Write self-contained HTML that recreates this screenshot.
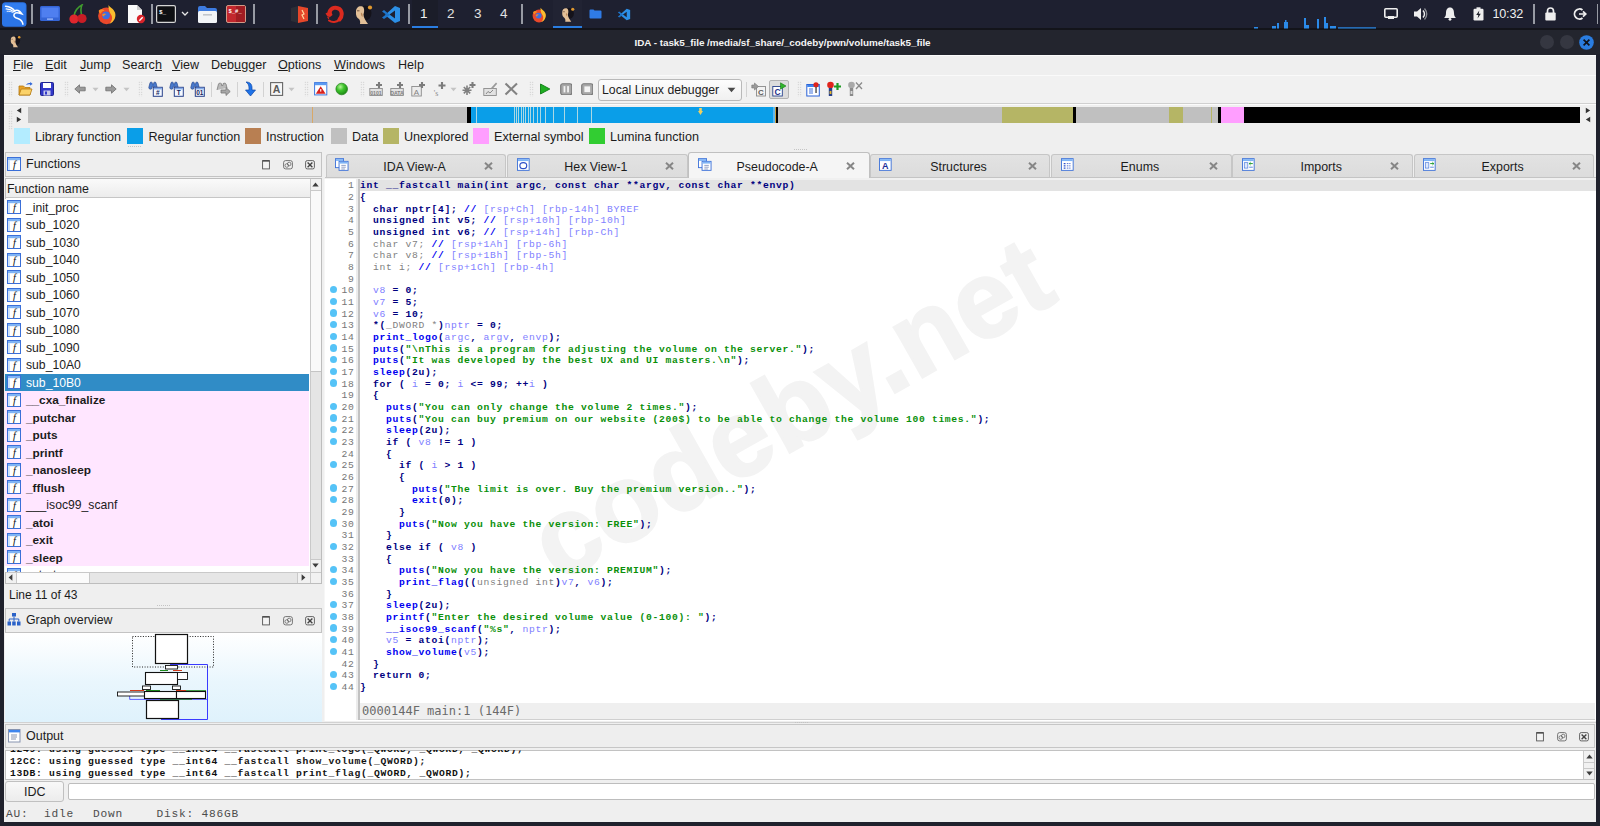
<!DOCTYPE html>
<html lang="en"><head><meta charset="utf-8"><title>IDA - task5_file</title>
<style>
*{box-sizing:border-box;margin:0;padding:0}
html,body{width:1600px;height:826px;overflow:hidden;background:#20222b}
body{position:relative;font-family:"Liberation Sans",sans-serif;font-size:12.6px;color:#1c1c1c}
.a{position:absolute}
.t{position:absolute;white-space:pre;line-height:16px}
#win{position:absolute;left:4px;top:54.5px;width:1592px;height:767.5px;background:#efefef}
.code{position:absolute;left:360px;white-space:pre;font-family:"Liberation Mono",monospace;font-size:9.7px;line-height:12px;height:12px;letter-spacing:0.685px}
.k{color:#00007f;font-weight:bold}
.f{color:#0000f0;font-weight:bold}
.c{color:#8080ff}
.g{color:#7f7f7f}
.s{color:#0a900a;font-weight:bold}
.ln{position:absolute;left:326px;width:28.6px;text-align:right;font-family:"Liberation Mono",monospace;font-size:9.7px;letter-spacing:0.685px;line-height:12px;color:#757575;white-space:pre}
.dot{position:absolute;left:329.7px;width:7.3px;height:7.3px;border-radius:50%;background:#55c3f7}
.row{position:absolute;left:5px;width:304px;height:17.5px}
.row .t{left:21px;top:1px;font-size:12.2px}
.fi{position:absolute;left:2px;top:1.5px;width:14px;height:14px}
</style></head>
<body>
<!-- desktop panel -->
<div class="a" id="panel" style="left:0;top:0;width:1600px;height:29px;background:#1e2030"></div>
<div class="a" style="left:0;top:28.300px;width:1600px;height:1.400px;background:#13141a"></div>
<div class="a" id="titlebar" style="left:0;top:29.700px;width:1600px;height:25px;background:#23252e"></div>
<!-- kali menu -->
<svg class="a" style="left:2px;top:1.500px" width="24.500" height="25" viewBox="0 0 24 24"><rect x="0" y="0" width="24" height="24" rx="3.500" fill="#2b74e6"/><rect x="1" y="1" width="22" height="10" rx="3" fill="#3683f5" opacity="0.6"/><g stroke="#fff" fill="none" stroke-linecap="round"><path d="M3.500 4 C7.500 4.500 10.500 6 12.500 8.500" stroke-width="1.5"/><path d="M4 6.500 C7 6.500 9.500 7.500 11.500 9.200" stroke-width="1.100"/><path d="M5 8.800 C7.500 8.600 9.500 9.200 11 10.200" stroke-width="0.9"/><path d="M12.500 8.500 C14.500 7 17 8 19.500 11.500 L16.500 10.600 C14.500 10 12.500 10.500 11.800 12 C11 14 13 15.200 15.500 16 C18.500 17 20 19 20.500 21.500" stroke-width="1.500"/></g></svg>
<div class="a" style="left:31px;top:4px;width:1.6px;height:20px;background:#979aa3"></div>
<!-- desktop icon -->
<svg class="a" style="left:40px;top:6px" width="20" height="17" viewBox="0 0 20 17"><rect x="0" y="0" width="20" height="15" rx="1.5" fill="#3565d6"/><rect x="1.5" y="1.5" width="17" height="10" fill="#4f7ff0"/><rect x="7" y="12.5" width="6" height="1.2" fill="#a9c2ff"/></svg>
<!-- cherry -->
<svg class="a" style="left:68px;top:4px" width="20" height="21" viewBox="0 0 20 21"><path d="M6 12 C7 6 10 3 14 1 C12 5 13 9 14 12" stroke="#3f9a2e" stroke-width="1.6" fill="none"/><circle cx="6" cy="15" r="4.6" fill="#e0262d"/><circle cx="14" cy="14.5" r="4.6" fill="#c81d25"/></svg>
<!-- firefox -->
<svg class="a" style="left:96px;top:4px" width="21" height="21" viewBox="0 0 21 21"><circle cx="10.5" cy="11.8" r="8.4" fill="#e9482b"/><path d="M12.500 1 C14 3.500 17.500 4.500 19 8.500 C20.500 13 18 18 13.500 19.800 C16.500 16.500 16.800 13 15 10.500 C13.500 8.500 12.300 5 12.500 1Z" fill="#fbbd2e"/><path d="M2.800 6.500 C4.500 4.800 7 5 8.500 6.800 C6.500 6.800 5.200 8 5 9.800 C3.500 9.300 2.500 8 2.800 6.500Z" fill="#f78a22"/><circle cx="10" cy="11.300" r="3.900" fill="#3d6fe2"/><path d="M6.200 10.500 C7.500 9 9.500 9.300 10.500 10.300 C9 10.300 8 11.300 8.300 12.500 C7 12.500 6.200 11.600 6.200 10.500Z" fill="#f78a22"/></svg>
<!-- document -->
<svg class="a" style="left:126px;top:4px" width="21" height="21" viewBox="0 0 21 21"><path d="M2 1 H11 L16 6 V19 H2Z" fill="#fafafa"/><path d="M11 1 L16 6 H11Z" fill="#cfcfcf"/><circle cx="15" cy="15" r="4.2" fill="#d8232a"/><rect x="12.6" y="14.3" width="4.8" height="1.4" fill="#fff" transform="rotate(-45 15 15)"/></svg>
<div class="a" style="left:151px;top:4px;width:1.6px;height:20px;background:#979aa3"></div>
<!-- terminal -->
<svg class="a" style="left:156px;top:5px" width="20" height="18" viewBox="0 0 20 18"><rect x="0.6" y="0.6" width="18.8" height="16.8" rx="1.5" fill="#0e0f13" stroke="#d5d5d5" stroke-width="1.2"/><text x="3" y="8.5" font-family="Liberation Mono,monospace" font-size="6" font-weight="bold" fill="#fff">$_</text></svg>
<svg class="a" style="left:181px;top:11px" width="8" height="6" viewBox="0 0 8 6"><path d="M1 1 L4 4 L7 1" stroke="#e6e6e6" stroke-width="1.3" fill="none"/></svg>
<!-- folder -->
<svg class="a" style="left:197px;top:5px" width="21" height="19" viewBox="0 0 21 19"><path d="M1 3 Q1 1 3 1 H8 L10 3 H18 Q20 3 20 5 V8 H1Z" fill="#3d7be0"/><rect x="1" y="6" width="19" height="12" rx="1.5" fill="#f2f4f7"/><rect x="6" y="9" width="9" height="1.6" fill="#c2c6cc"/></svg>
<!-- red terminal -->
<svg class="a" style="left:226px;top:5px" width="20" height="18" viewBox="0 0 20 18"><rect x="0.5" y="0.5" width="19" height="17" rx="1.5" fill="#c2272d" stroke="#e8b9a0" stroke-width="0.8"/><rect x="10" y="1" width="9" height="16" fill="#a01c22"/><text x="2.5" y="8" font-family="Liberation Mono,monospace" font-size="5.5" font-weight="bold" fill="#fff">$_#_</text></svg>
<div class="a" style="left:253px;top:4px;width:1.6px;height:20px;background:#979aa3"></div>
<!-- orange box icon -->
<svg class="a" style="left:290px;top:5px" width="20" height="19" viewBox="0 0 20 19"><path d="M1 3 L8 1 V18 L1 16Z" fill="#2b2d36"/><path d="M8 1 L18 3 V16 L8 18Z" fill="#e6472a"/><path d="M12 5 L14 9 L12 10 L14 14" stroke="#ffd9a0" stroke-width="1.2" fill="none"/></svg>
<div class="a" style="left:316px;top:4px;width:1.6px;height:20px;background:#979aa3"></div>
<!-- red dragon -->
<svg class="a" style="left:324px;top:4px" width="21" height="21" viewBox="0 0 21 21"><g stroke="#db2a1f" fill="none" stroke-linecap="round"><path d="M5.500 8 C7 3.500 12 2.500 15.500 5 C18.500 7.500 18.500 12.500 15.500 15.500" stroke-width="4"/><path d="M15.500 15.500 C12.500 18.500 8 18.800 5 16.500" stroke-width="2"/></g><path d="M1.500 9.500 L7 6.500 L8.500 11 L6 13 L3.500 12.500Z" fill="#db2a1f"/><path d="M3 12.800 L5.500 13.500 L4.500 15.500Z" fill="#db2a1f"/></svg>
<!-- lady (IDA) -->
<svg class="a" style="left:353px;top:3px" width="20" height="23" viewBox="0 0 20 22"><ellipse cx="12" cy="9.5" rx="6.5" ry="7.5" fill="#14121a"/><path d="M3 8 C3 4 6 2 9.5 3 C11.5 4 11.5 8 10.5 11 C10.5 14 12.5 17 15 20.5 L7 20.5 C7.500 18.500 7 16.500 6 15.500 C4 14.500 2.500 12 3 8Z" fill="#e2bf97"/><path d="M8 9 C9.500 9.500 10 11.500 9.500 13.500 C8.500 12.500 7.500 11 8 9Z" fill="#b98659"/><path d="M4 7.300 H6.500" stroke="#6a4a35" stroke-width="0.9"/><circle cx="17" cy="4" r="2.1" fill="#df982f"/></svg>
<!-- vscode -->
<svg class="a" style="left:381px;top:5px" width="20" height="19" viewBox="0 0 20 19"><path d="M14 1 L19 3 V16 L14 18 L4 10 L14 1Z M14 5.5 L8.5 9.5 L14 13.5Z" fill="#2c8fe6" fill-rule="evenodd"/><path d="M1 6.5 L3 5 L9 10 L3 14 L1 12.5 L5 9.5Z" fill="#1d74c9"/></svg>
<div class="a" style="left:408px;top:4px;width:1.6px;height:20px;background:#979aa3"></div>
<!-- workspaces -->
<div class="a" style="left:412px;top:0;width:26px;height:28px;background:#1b1d29"></div>
<div class="a" style="left:412px;top:26px;width:26px;height:2px;background:#2a7de1"></div>
<span class="t" style="left:420px;top:6px;color:#f2f2f2;font-size:13.5px">1</span>
<span class="t" style="left:447px;top:6px;color:#e2e2e2;font-size:13.5px">2</span>
<span class="t" style="left:474px;top:6px;color:#e2e2e2;font-size:13.5px">3</span>
<span class="t" style="left:500px;top:6px;color:#e2e2e2;font-size:13.5px">4</span>
<div class="a" style="left:521px;top:4px;width:1.6px;height:20px;background:#979aa3"></div>
<!-- task icons -->
<svg class="a" style="left:531px;top:7px" width="16" height="16" viewBox="0 0 21 21"><circle cx="10.5" cy="11.8" r="8.4" fill="#e9482b"/><path d="M12.500 1 C14 3.500 17.500 4.500 19 8.500 C20.500 13 18 18 13.500 19.800 C16.500 16.500 16.800 13 15 10.500 C13.500 8.500 12.300 5 12.500 1Z" fill="#fbbd2e"/><path d="M2.800 6.500 C4.500 4.800 7 5 8.500 6.800 C6.500 6.800 5.200 8 5 9.800 C3.500 9.300 2.500 8 2.800 6.500Z" fill="#f78a22"/><circle cx="10" cy="11.300" r="3.900" fill="#3d6fe2"/><path d="M6.200 10.500 C7.500 9 9.500 9.300 10.500 10.300 C9 10.300 8 11.300 8.300 12.500 C7 12.500 6.200 11.600 6.200 10.500Z" fill="#f78a22"/></svg>
<div class="a" style="left:553px;top:0;width:29px;height:28px;background:#212333"></div>
<div class="a" style="left:553px;top:26px;width:29px;height:2px;background:#2a7de1"></div>
<svg class="a" style="left:560px;top:6px" width="15" height="17" viewBox="0 0 20 22"><ellipse cx="12" cy="9.5" rx="6.5" ry="7.5" fill="#14121a"/><path d="M3 8 C3 4 6 2 9.5 3 C11.5 4 11.5 8 10.5 11 C10.5 14 12.5 17 15 20.5 L7 20.5 C7.500 18.500 7 16.500 6 15.500 C4 14.500 2.500 12 3 8Z" fill="#e2bf97"/><path d="M8 9 C9.500 9.500 10 11.500 9.500 13.500 C8.500 12.500 7.500 11 8 9Z" fill="#b98659"/><path d="M4 7.300 H6.500" stroke="#6a4a35" stroke-width="0.9"/><circle cx="17" cy="4" r="2.1" fill="#df982f"/></svg>
<svg class="a" style="left:589px;top:9px" width="13" height="10" viewBox="0 0 13 10"><path d="M0.500 1.500 Q0.500 0.500 1.500 0.500 H4.500 L5.500 1.500 H11.500 Q12.500 1.500 12.500 2.500 V8.500 Q12.500 9.500 11.500 9.500 H1.500 Q0.500 9.500 0.500 8.500Z" fill="#2f7be6"/></svg>
<svg class="a" style="left:617px;top:8px" width="14" height="13" viewBox="0 0 20 19"><path d="M14 1 L19 3 V16 L14 18 L4 10 L14 1Z M14 5.5 L8.5 9.5 L14 13.5Z" fill="#2c8fe6" fill-rule="evenodd"/><path d="M1 6.5 L3 5 L9 10 L3 14 L1 12.5 L5 9.5Z" fill="#1d74c9"/></svg>
<!-- cpu graph -->
<svg class="a" style="left:1250px;top:14px" width="130" height="15" viewBox="0 0 130 15"><g fill="#2b8bea"><rect x="4" y="13" width="4" height="1.5"/><rect x="22" y="12" width="4" height="2.5"/><rect x="27" y="9" width="2" height="5.5"/><rect x="34" y="8" width="4" height="6.5"/><rect x="35" y="6" width="1.5" height="3"/><rect x="54" y="4" width="2" height="10.5"/><rect x="56" y="11" width="3" height="3.5"/><rect x="67" y="5" width="2" height="9.5"/><rect x="74" y="3" width="2" height="11.5"/><rect x="76" y="9" width="2" height="5.5"/><rect x="80" y="12" width="6" height="2.5"/><rect x="88" y="13.3" width="38" height="1.2"/></g></svg>
<!-- tray -->
<svg class="a" style="left:1384px;top:8px" width="14" height="12" viewBox="0 0 14 12"><rect x="0.8" y="0.8" width="12.4" height="8.4" rx="1" fill="none" stroke="#eee" stroke-width="1.6"/><rect x="4" y="8" width="6" height="3" fill="#eee"/></svg>
<svg class="a" style="left:1413px;top:7px" width="16" height="14" viewBox="0 0 16 14"><path d="M1 4.5 H4 L8 1 V13 L4 9.5 H1Z" fill="#eee"/><path d="M10 3.5 Q13 7 10 10.5" stroke="#eee" stroke-width="1.4" fill="none"/><path d="M11.5 1.5 Q16 7 11.5 12.5" stroke="#8a8c93" stroke-width="1.3" fill="none"/></svg>
<svg class="a" style="left:1443px;top:7px" width="14" height="14" viewBox="0 0 14 14"><path d="M7 0.5 C10 0.5 11 3 11 6 C11 9 12 10 13 11 H1 C2 10 3 9 3 6 C3 3 4 0.5 7 0.5Z" fill="#eee"/><circle cx="7" cy="12.3" r="1.4" fill="#eee"/></svg>
<svg class="a" style="left:1473px;top:7px" width="11" height="14" viewBox="0 0 11 14"><rect x="0.5" y="1.8" width="10" height="11.7" rx="1.2" fill="#eee"/><rect x="3.5" y="0.3" width="4" height="2" fill="#eee"/><path d="M6.3 3.5 L3.2 8 H5.3 L4.6 11.5 L7.8 6.8 H5.7Z" fill="#1e2029"/></svg>
<span class="t" style="left:1492.5px;top:6px;color:#f0f0f0;font-size:12.6px;letter-spacing:-0.2px">10:32</span>
<div class="a" style="left:1533px;top:4px;width:1.6px;height:20px;background:#979aa3"></div>
<svg class="a" style="left:1545px;top:7px" width="11" height="14" viewBox="0 0 11 14"><path d="M2.5 6 V4 Q2.5 1 5.5 1 Q8.5 1 8.5 4 V6" stroke="#eee" stroke-width="1.7" fill="none"/><rect x="0.3" y="5.6" width="10.4" height="7.8" rx="1" fill="#eee"/></svg>
<svg class="a" style="left:1573px;top:7px" width="14" height="14" viewBox="0 0 14 14"><path d="M9.5 3 A5 5 0 1 0 9.5 11" stroke="#eee" stroke-width="1.8" fill="none"/><path d="M6 7 H12.5 M10 4.3 L12.8 7 L10 9.7" stroke="#eee" stroke-width="1.7" fill="none"/></svg>
<div class="a" style="left:1596.5px;top:4px;width:1.6px;height:20px;background:#979aa3"></div>
<!-- title bar -->
<svg class="a" style="left:9px;top:34px" width="12" height="15" viewBox="0 0 20 22"><ellipse cx="12" cy="9.5" rx="6.5" ry="7.5" fill="#14121a"/><path d="M3 8 C3 4 6 2 9.5 3 C11.5 4 11.5 8 10.5 11 C10.5 14 12.5 17 15 20.5 L7 20.5 C7.500 18.500 7 16.500 6 15.500 C4 14.500 2.500 12 3 8Z" fill="#e2bf97"/><path d="M8 9 C9.500 9.500 10 11.500 9.500 13.500 C8.500 12.500 7.500 11 8 9Z" fill="#b98659"/><path d="M4 7.300 H6.500" stroke="#6a4a35" stroke-width="0.9"/><circle cx="17" cy="4" r="2.1" fill="#df982f"/></svg>
<span class="t" id="title" style="left:634.5px;top:35px;color:#f4f4f4;font-size:9.92px;font-weight:bold;letter-spacing:-0.05px">IDA - task5_file /media/sf_share/_codeby/pwn/volume/task5_file</span>
<div class="a" style="left:1539.5px;top:35px;width:14px;height:14px;border-radius:50%;background:#353741"></div>
<div class="a" style="left:1559.5px;top:35px;width:14px;height:14px;border-radius:50%;background:#353741"></div>
<svg class="a" style="left:1579px;top:34.5px" width="15" height="15" viewBox="0 0 15 15"><circle cx="7.5" cy="7.5" r="7.3" fill="#2a7de1"/><path d="M4.6 4.6 L10.4 10.4 M10.4 4.6 L4.6 10.4" stroke="#10131c" stroke-width="1.7"/></svg>
<div id="win"></div>
<div class="a" style="left:4px;top:54.5px;width:1592px;height:20.5px;background:#efefef;"></div>
<div class="a" style="left:4px;top:54.5px;width:1592px;height:1px;background:#fbfbfb;"></div>
<div class="a" style="left:4px;top:75px;width:1592px;height:1px;background:#fafafa;"></div>
<div class="a" style="left:4px;top:76px;width:1592px;height:27px;background:#f1f1f1;"></div>
<div class="a" style="left:4px;top:103px;width:1592px;height:1px;background:#d0d0d0;"></div>
<div class="a" style="left:4px;top:104px;width:1592px;height:1px;background:#fbfbfb;"></div>
<span class="t" style="left:13px;top:57px;"><u>F</u>ile</span>
<span class="t" style="left:45px;top:57px;"><u>E</u>dit</span>
<span class="t" style="left:80px;top:57px;"><u>J</u>ump</span>
<span class="t" style="left:122px;top:57px;">Searc<u>h</u></span>
<span class="t" style="left:172px;top:57px;"><u>V</u>iew</span>
<span class="t" style="left:211px;top:57px;">Deb<u>u</u>gger</span>
<span class="t" style="left:278px;top:57px;"><u>O</u>ptions</span>
<span class="t" style="left:334px;top:57px;"><u>W</u>indows</span>
<span class="t" style="left:398px;top:57px;">Help</span>
<div class="a" style="left:7.5px;top:81px;width:5px;height:16px;background-image:radial-gradient(circle,#c2c2c2 0.6px,transparent 0.85px);background-size:2.5px 2.5px"></div>
<svg class="a" style="left:18px;top:81px" width="15" height="16" viewBox="0 0 15 16"><path d="M1 5 H5.5 L7 6.5 H12 V14 H1Z" fill="#e9a227" stroke="#b47a12" stroke-width="0.8"/><path d="M1 14 L3.2 8 H14 L12 14Z" fill="#fbd269" stroke="#b47a12" stroke-width="0.8"/><path d="M8 4 C9 2 11 1.5 12.5 2.2 L12 0.8 L14.6 3 L11.8 4.8 L12.2 3.4 C11 3 9.5 3.3 8 4Z" fill="#2a62d8"/></svg>
<svg class="a" style="left:40px;top:82px" width="14" height="14" viewBox="0 0 14 14"><rect x="0.5" y="0.5" width="13" height="13" rx="1" fill="#3238c8" stroke="#1f2490"/><rect x="3" y="1" width="8" height="5" fill="#fff"/><rect x="3.5" y="8.5" width="7" height="5" fill="#c9cbea"/><rect x="5" y="9.5" width="2" height="3" fill="#3238c8"/></svg>
<div class="a" style="left:63.5px;top:81px;width:5px;height:16px;background-image:radial-gradient(circle,#c2c2c2 0.6px,transparent 0.85px);background-size:2.5px 2.5px"></div>
<svg class="a" style="left:74px;top:84px" width="12" height="10" viewBox="0 0 12 10"><path d="M0.8 5 L5.5 0.8 V3.2 H11.2 V6.8 H5.5 V9.2Z" fill="#9a9a9a" stroke="#6e6e6e" stroke-width="0.8"/></svg>
<svg class="a" style="left:92px;top:87px" width="7" height="5" viewBox="0 0 7 5"><path d="M0.5 0.8 H6.5 L3.5 4.2Z" fill="#c4c4c4"/></svg>
<svg class="a" style="left:105px;top:84px" width="12" height="10" viewBox="0 0 12 10"><path d="M11.2 5 L6.5 0.8 V3.2 H0.8 V6.8 H6.5 V9.2Z" fill="#9a9a9a" stroke="#6e6e6e" stroke-width="0.8"/></svg>
<svg class="a" style="left:123px;top:87px" width="7" height="5" viewBox="0 0 7 5"><path d="M0.5 0.8 H6.5 L3.5 4.2Z" fill="#c4c4c4"/></svg>
<div class="a" style="left:137.5px;top:81px;width:5px;height:16px;background-image:radial-gradient(circle,#c2c2c2 0.6px,transparent 0.85px);background-size:2.5px 2.5px"></div>
<svg class="a" style="left:148px;top:81px" width="15" height="16" viewBox="0 0 15 16"><path d="M0.8 6.5 L2 2 Q2.300 0.800 3.500 1.200 L4.200 1.600 V3 H5.800 V1.600 L6.500 1.200 Q7.700 0.800 8 2 L9.200 6.500 Q9.200 8.200 7.500 8.200 Q5.800 8.200 5.800 6.500 V5.200 H4.200 V6.500 Q4.200 8.200 2.500 8.200 Q0.800 8.200 0.800 6.500Z" fill="#4a7acc" stroke="#27478f" stroke-width="0.7"/><rect x="5.300" y="6.300" width="9" height="9" fill="#f4f8ff" stroke="#27408a" stroke-width="1"/><rect x="5.800" y="6.800" width="8" height="1.600" fill="#7fa8e8"/><text x="9.800" y="14.300" font-family="Liberation Sans,sans-serif" font-weight="bold" font-size="6.500" text-anchor="middle" fill="#16245c">#</text></svg>
<svg class="a" style="left:169px;top:81px" width="15" height="16" viewBox="0 0 15 16"><path d="M0.8 6.5 L2 2 Q2.300 0.800 3.500 1.200 L4.200 1.600 V3 H5.800 V1.600 L6.500 1.200 Q7.700 0.800 8 2 L9.200 6.500 Q9.200 8.200 7.500 8.200 Q5.800 8.200 5.800 6.500 V5.200 H4.200 V6.500 Q4.200 8.200 2.500 8.200 Q0.800 8.200 0.800 6.500Z" fill="#4a7acc" stroke="#27478f" stroke-width="0.7"/><rect x="5.300" y="6.300" width="9" height="9" fill="#f4f8ff" stroke="#27408a" stroke-width="1"/><rect x="5.800" y="6.800" width="8" height="1.600" fill="#7fa8e8"/><text x="9.800" y="14.300" font-family="Liberation Sans,sans-serif" font-weight="bold" font-size="6.500" text-anchor="middle" fill="#16245c">T</text></svg>
<svg class="a" style="left:190px;top:81px" width="15" height="16" viewBox="0 0 15 16"><path d="M0.8 6.5 L2 2 Q2.300 0.800 3.500 1.200 L4.200 1.600 V3 H5.800 V1.600 L6.500 1.200 Q7.700 0.800 8 2 L9.200 6.500 Q9.200 8.200 7.500 8.200 Q5.800 8.200 5.800 6.500 V5.200 H4.200 V6.500 Q4.200 8.200 2.500 8.200 Q0.800 8.200 0.800 6.500Z" fill="#4a7acc" stroke="#27478f" stroke-width="0.7"/><rect x="5.300" y="6.300" width="9" height="9" fill="#f4f8ff" stroke="#27408a" stroke-width="1"/><rect x="5.800" y="6.800" width="8" height="1.600" fill="#7fa8e8"/><text x="9.800" y="14.300" font-family="Liberation Sans,sans-serif" font-weight="bold" font-size="6.500" text-anchor="middle" fill="#16245c">01</text></svg>
<div class="a" style="left:211px;top:82px;width:1px;height:15px;background:#d2d2d2;"></div>
<svg class="a" style="left:216px;top:82px" width="15" height="14" viewBox="0 0 15 14"><path d="M1 8 L2.5 2 Q3 0.8 4.5 1.2 L5.5 1.7 V3.5 H7 V1.7 L8 1.2 Q9.5 0.8 10 2 L11 6" fill="#b9b9b9" stroke="#7d7d7d" stroke-width="0.8"/><path d="M5 8 H10 V5.5 L14.2 9.5 L10 13.5 V11 H5Z" fill="#a6a6a6" stroke="#767676" stroke-width="0.8"/></svg>
<div class="a" style="left:237px;top:82px;width:1px;height:15px;background:#d2d2d2;"></div>
<svg class="a" style="left:244px;top:81px" width="13" height="16" viewBox="0 0 13 16"><path d="M2 1 C6 1 8 3 8 7 V9 H11.5 L6.5 15 L1.5 9 H5 V7 C5 4 4 2.5 2 1Z" fill="#1f73e8" stroke="#0d46a8" stroke-width="0.7"/></svg>
<div class="a" style="left:263px;top:82px;width:1px;height:15px;background:#d2d2d2;"></div>
<svg class="a" style="left:270px;top:82px" width="14" height="14" viewBox="0 0 14 14"><rect x="0.6" y="0.6" width="12" height="12.8" fill="#f6f6f6" stroke="#666" stroke-width="1.1"/><text x="6.600" y="11" font-family="Liberation Sans,sans-serif" font-size="10.500" font-weight="bold" text-anchor="middle" fill="#5a5a5a">A</text></svg>
<svg class="a" style="left:288px;top:87px" width="7" height="5" viewBox="0 0 7 5"><path d="M0.5 0.8 H6.5 L3.5 4.2Z" fill="#c4c4c4"/></svg>
<div class="a" style="left:303.5px;top:81px;width:5px;height:16px;background-image:radial-gradient(circle,#c2c2c2 0.6px,transparent 0.85px);background-size:2.5px 2.5px"></div>
<svg class="a" style="left:314px;top:82px" width="14" height="14" viewBox="0 0 14 14"><rect x="0.6" y="0.6" width="12.200" height="12.300" fill="#fff" stroke="#3b78e0" stroke-width="1"/><rect x="1" y="1" width="11.400" height="2.200" fill="#5a9af2"/><path d="M6.700 4.300 L11.600 11.800 H1.800Z" fill="#d8211c"/><rect x="6.200" y="7" width="1.100" height="2.600" fill="#fff"/></svg>
<svg class="a" style="left:335px;top:82px" width="14" height="14" viewBox="0 0 14 14"><defs><radialGradient id="gg" cx="0.38" cy="0.32" r="0.7"><stop offset="0" stop-color="#b6f59a"/><stop offset="0.45" stop-color="#3fc42d"/><stop offset="1" stop-color="#1b8a13"/></radialGradient></defs><circle cx="6.700" cy="7" r="5.800" fill="url(#gg)" stroke="#1d7c16" stroke-width="0.7"/></svg>
<div class="a" style="left:359.5px;top:81px;width:5px;height:16px;background-image:radial-gradient(circle,#c2c2c2 0.6px,transparent 0.85px);background-size:2.5px 2.5px"></div>
<svg class="a" style="left:369px;top:81px" width="15" height="16" viewBox="0 0 15 16"><rect x="0.8" y="7.5" width="12.5" height="7" fill="#e2e2e2" stroke="#8c8c8c" stroke-width="0.9"/><text x="7" y="13.6" font-family="Liberation Sans,sans-serif" font-size="5.2" font-weight="bold" text-anchor="middle" fill="#808080">0101</text><path d="M10 1 V7 M7 4 H13" stroke="#7c7c7c" stroke-width="2.1"/></svg>
<svg class="a" style="left:390px;top:81px" width="15" height="16" viewBox="0 0 15 16"><rect x="0.8" y="7.5" width="12.5" height="7" fill="#e2e2e2" stroke="#8c8c8c" stroke-width="0.9"/><text x="7" y="13.6" font-family="Liberation Sans,sans-serif" font-size="5.2" font-weight="bold" text-anchor="middle" fill="#808080">DATA</text><path d="M10 1 V7 M7 4 H13" stroke="#7c7c7c" stroke-width="2.1"/></svg>
<svg class="a" style="left:411px;top:81px" width="15" height="16" viewBox="0 0 15 16"><rect x="0.8" y="5.5" width="9.5" height="9.5" fill="#ececec" stroke="#8c8c8c" stroke-width="0.9"/><text x="5.5" y="13.6" font-family="Liberation Sans,sans-serif" font-size="8" text-anchor="middle" fill="#808080">A</text><path d="M11 1 V7 M8 4 H14" stroke="#7c7c7c" stroke-width="2.1"/></svg>
<svg class="a" style="left:432px;top:81px" width="15" height="16" viewBox="0 0 15 16"><text x="4" y="14.5" font-family="Liberation Serif,serif" font-size="8" text-anchor="middle" fill="#8a8a8a">'s</text><path d="M10 1 V8 M6.5 4.5 H13.5" stroke="#7c7c7c" stroke-width="2.1"/></svg>
<svg class="a" style="left:450px;top:87px" width="7" height="5" viewBox="0 0 7 5"><path d="M0.5 0.8 H6.5 L3.5 4.2Z" fill="#c4c4c4"/></svg>
<svg class="a" style="left:462px;top:81px" width="15" height="16" viewBox="0 0 15 16"><path d="M5 4.500 V14 M0.500 9.200 H9.500 M1.800 6 L8.200 12.400 M8.200 6 L1.800 12.400" stroke="#808080" stroke-width="1.6"/><path d="M10.5 1 V7 M7.5 4 H13.5" stroke="#7c7c7c" stroke-width="2.1"/></svg>
<svg class="a" style="left:483px;top:81px" width="15" height="16" viewBox="0 0 15 16"><rect x="0.8" y="7.5" width="12.5" height="7" fill="#e2e2e2" stroke="#8c8c8c" stroke-width="0.9"/><path d="M3 13 L5 10.5 L7 12 L10 9" stroke="#8a8a8a" stroke-width="1" fill="none"/><path d="M8 7 L13 1.5 L14.2 2.7 L9.5 8Z" fill="#9a9a9a"/></svg>
<svg class="a" style="left:504px;top:82px" width="15" height="14" viewBox="0 0 15 14"><path d="M1.5 1.5 L13 12.5 M13 1.5 L1.5 12.5" stroke="#828282" stroke-width="2.1"/></svg>
<div class="a" style="left:528.5px;top:81px;width:5px;height:16px;background-image:radial-gradient(circle,#c2c2c2 0.6px,transparent 0.85px);background-size:2.5px 2.5px"></div>
<svg class="a" style="left:539px;top:83px" width="12" height="12" viewBox="0 0 12 12"><path d="M1.5 1 L10.8 6 L1.5 11Z" fill="#1fae22" stroke="#0f7d14" stroke-width="0.9"/></svg>
<svg class="a" style="left:559.5px;top:82.5px" width="12.5" height="12.5" viewBox="0 0 14 14"><rect x="0.8" y="0.8" width="12.4" height="12.4" rx="2.2" fill="#a8a8a8" stroke="#7a7a7a" stroke-width="1.3"/><rect x="4" y="3.5" width="2" height="7" fill="#f4f4f4"/><rect x="8" y="3.5" width="2" height="7" fill="#f4f4f4"/></svg>
<svg class="a" style="left:580.5px;top:82.5px" width="12.5" height="12.5" viewBox="0 0 14 14"><rect x="0.8" y="0.8" width="12.4" height="12.4" rx="2.2" fill="#a8a8a8" stroke="#7a7a7a" stroke-width="1.3"/><rect x="3.8" y="3.8" width="6.4" height="6.4" fill="#f4f4f4"/></svg>
<div class="a" style="left:597.5px;top:78.5px;width:144px;height:22px;border:1px solid #b9b9b9;border-radius:3px;background:linear-gradient(#fdfdfd,#f0f0f0)"></div>
<span class="t" style="left:602px;top:81.5px;font-size:12.25px">Local Linux debugger</span>
<svg class="a" style="left:727px;top:87px" width="9" height="6" viewBox="0 0 9 6"><path d="M0.6 0.8 H8.4 L4.5 5.2Z" fill="#4a4a4a"/></svg>
<div class="a" style="left:745.5px;top:82px;width:1px;height:15px;background:#d2d2d2;"></div>
<svg class="a" style="left:751px;top:82px" width="15" height="15" viewBox="0 0 15 15"><rect x="5.5" y="4.5" width="9" height="9.5" fill="#f2f2f2" stroke="#8a8a8a" stroke-width="0.9"/><text x="10" y="12.6" font-family="Liberation Sans,sans-serif" font-size="8" font-weight="bold" text-anchor="middle" fill="#5d5d5d">C</text><path d="M0.8 3 H3.5 V1 L7.5 4.5 L3.5 8 V6 H0.8Z" fill="#9a9a9a" stroke="#777" stroke-width="0.6"/></svg>
<div class="a" style="left:769px;top:80px;width:20px;height:19px;border:1px solid #b2b2b2;border-radius:2px;background:#dcdcdc"></div>
<svg class="a" style="left:772px;top:82px" width="15" height="15" viewBox="0 0 15 15"><rect x="0.8" y="4.5" width="9.5" height="9.5" fill="#fff" stroke="#27408a" stroke-width="0.9"/><text x="5.5" y="12.8" font-family="Liberation Sans,sans-serif" font-size="8.5" font-weight="bold" text-anchor="middle" fill="#1f2f8a">C</text><path d="M8.5 0.8 L14 4 L8.5 7.2Z" fill="#2fb52a" stroke="#167a14" stroke-width="0.6"/></svg>
<div class="a" style="left:796.5px;top:81px;width:5px;height:16px;background-image:radial-gradient(circle,#c2c2c2 0.6px,transparent 0.85px);background-size:2.5px 2.5px"></div>
<svg class="a" style="left:806px;top:81px" width="15" height="16" viewBox="0 0 15 16"><rect x="0.8" y="3.5" width="12.5" height="11.5" fill="#fff" stroke="#2a62d8" stroke-width="1"/><rect x="1.2" y="4" width="11.7" height="2" fill="#3f86ee"/><path d="M3 8 H7 M3 10 H7 M3 12 H7" stroke="#2a62d8" stroke-width="0.9"/><circle cx="10" cy="3.8" r="2.6" fill="#e0241c"/><rect x="9.3" y="6" width="1.5" height="6" fill="#555"/></svg>
<svg class="a" style="left:826px;top:81px" width="16" height="16" viewBox="0 0 16 16"><circle cx="4.5" cy="4" r="3.3" fill="#e0241c"/><rect x="2.8" y="7" width="3.4" height="8" fill="#27408a"/><rect x="3.6" y="10" width="1.8" height="3" fill="#e7b52a"/><path d="M11.5 2 V9 M8 5.5 H15" stroke="#1f9a22" stroke-width="2.2"/></svg>
<svg class="a" style="left:847px;top:81px" width="16" height="16" viewBox="0 0 16 16"><circle cx="4.5" cy="4" r="3.3" fill="#a9a9a9"/><rect x="2.8" y="7" width="3.4" height="8" fill="#8a8a8a"/><rect x="3.6" y="10" width="1.8" height="3" fill="#d9d9d9"/><path d="M9 1.5 L15 8 M15 1.5 L9 8" stroke="#8a8a8a" stroke-width="1.3"/></svg>
<div class="a" style="left:7.5px;top:110px;width:5px;height:20px;background-image:radial-gradient(circle,#c2c2c2 0.6px,transparent 0.85px);background-size:2.5px 2.5px"></div>
<svg class="a" style="left:16px;top:107px" width="6" height="16" viewBox="0 0 6 16"><path d="M5.2 0.8 V6.2 L0.8 3.5Z M0.8 9.8 V15.2 L5.2 12.5Z" fill="#333"/></svg>
<div class="a" style="left:27.5px;top:107px;width:439.5px;height:16px;background:#c0c0c0;"></div>
<div class="a" style="left:467px;top:107px;width:3.5px;height:16px;background:#000;"></div>
<div class="a" style="left:470.5px;top:107px;width:302.5px;height:16px;background:#0a9ee8;"></div>
<div class="a" style="left:773px;top:107px;width:2px;height:16px;background:#5fb8f0;"></div>
<div class="a" style="left:775px;top:107px;width:3px;height:16px;background:#000;"></div>
<div class="a" style="left:778px;top:107px;width:223.5px;height:16px;background:#c0c0c0;"></div>
<div class="a" style="left:1001.5px;top:107px;width:71.5px;height:16px;background:#b5b565;"></div>
<div class="a" style="left:1073px;top:107px;width:3px;height:16px;background:#000;"></div>
<div class="a" style="left:1076px;top:107px;width:93px;height:16px;background:#c0c0c0;"></div>
<div class="a" style="left:1169px;top:107px;width:13.5px;height:16px;background:#b5b565;"></div>
<div class="a" style="left:1182.5px;top:107px;width:35.0px;height:16px;background:#c0c0c0;"></div>
<div class="a" style="left:1217.5px;top:107px;width:3.0px;height:16px;background:#000;"></div>
<div class="a" style="left:1220.5px;top:107px;width:23.5px;height:16px;background:#ff9eff;"></div>
<div class="a" style="left:1244px;top:107px;width:336px;height:16px;background:#000;"></div>
<div class="a" style="left:312.3px;top:107px;width:0.8px;height:16px;background:#d8a868;"></div>
<div class="a" style="left:775px;top:107px;width:0.8px;height:16px;background:#c9a040;"></div>
<div class="a" style="left:1211px;top:107px;width:0.8px;height:16px;background:#b5b565;"></div>
<div class="a" style="left:476px;top:107px;width:0.7px;height:16px;background:rgba(225,235,225,0.75);"></div>
<div class="a" style="left:513.7px;top:107px;width:0.7px;height:16px;background:rgba(225,235,225,0.75);"></div>
<div class="a" style="left:516px;top:107px;width:0.7px;height:16px;background:rgba(225,235,225,0.75);"></div>
<div class="a" style="left:518.3px;top:107px;width:0.7px;height:16px;background:rgba(225,235,225,0.75);"></div>
<div class="a" style="left:520.6px;top:107px;width:0.7px;height:16px;background:rgba(225,235,225,0.75);"></div>
<div class="a" style="left:523px;top:107px;width:0.7px;height:16px;background:rgba(225,235,225,0.75);"></div>
<div class="a" style="left:525.3px;top:107px;width:0.7px;height:16px;background:rgba(225,235,225,0.75);"></div>
<div class="a" style="left:527.6px;top:107px;width:0.7px;height:16px;background:rgba(225,235,225,0.75);"></div>
<div class="a" style="left:530px;top:107px;width:0.7px;height:16px;background:rgba(225,235,225,0.75);"></div>
<div class="a" style="left:533px;top:107px;width:0.7px;height:16px;background:rgba(225,235,225,0.75);"></div>
<div class="a" style="left:536.5px;top:107px;width:0.7px;height:16px;background:rgba(225,235,225,0.75);"></div>
<div class="a" style="left:540px;top:107px;width:0.7px;height:16px;background:rgba(225,235,225,0.75);"></div>
<div class="a" style="left:544.5px;top:107px;width:0.7px;height:16px;background:rgba(225,235,225,0.75);"></div>
<div class="a" style="left:553px;top:107px;width:0.7px;height:16px;background:rgba(225,235,225,0.75);"></div>
<div class="a" style="left:563.5px;top:107px;width:0.7px;height:16px;background:rgba(225,235,225,0.75);"></div>
<div class="a" style="left:577px;top:107px;width:0.7px;height:16px;background:rgba(225,235,225,0.75);"></div>
<div class="a" style="left:590.5px;top:107px;width:0.7px;height:16px;background:rgba(225,235,225,0.75);"></div>
<svg class="a" style="left:698px;top:107.5px" width="5" height="7" viewBox="0 0 5 7"><path d="M1.2 0 H3.8 V3 H5 L2.5 7 L0 3 H1.2Z" fill="#f0d060"/></svg>
<svg class="a" style="left:1585px;top:107px" width="6" height="16" viewBox="0 0 6 16"><path d="M0.8 0.8 V6.2 L5.2 3.5Z M5.2 9.8 V15.2 L0.8 12.5Z" fill="#333"/></svg>
<div class="a" style="left:14px;top:128px;width:16px;height:16px;background:#b3ecff;"></div>
<span class="t" style="left:35px;top:128.5px;font-size:12.6px">Library function</span>
<div class="a" style="left:127px;top:128px;width:16px;height:16px;background:#0a9ee8;"></div>
<span class="t" style="left:148.5px;top:128.5px;font-size:12.6px">Regular function</span>
<div class="a" style="left:245px;top:128px;width:16px;height:16px;background:#b87f52;"></div>
<span class="t" style="left:266px;top:128.5px;font-size:12.6px">Instruction</span>
<div class="a" style="left:331px;top:128px;width:16px;height:16px;background:#c0c0c0;"></div>
<span class="t" style="left:352px;top:128.5px;font-size:12.6px">Data</span>
<div class="a" style="left:383px;top:128px;width:16px;height:16px;background:#b5b565;"></div>
<span class="t" style="left:404px;top:128.5px;font-size:12.6px">Unexplored</span>
<div class="a" style="left:473px;top:128px;width:16px;height:16px;background:#ff9eff;"></div>
<span class="t" style="left:494px;top:128.5px;font-size:12.6px">External symbol</span>
<div class="a" style="left:589px;top:128px;width:16px;height:16px;background:#32cd32;"></div>
<span class="t" style="left:610px;top:128.5px;font-size:12.6px">Lumina function</span>
<div class="a" style="left:128px;top:145.5px;width:14px;height:1px;background:transparent;background-image:repeating-linear-gradient(90deg,#c4c4c4 0 1px,transparent 1px 2px)"></div>
<div class="a" style="left:794px;top:148.5px;width:14px;height:1px;background:transparent;background-image:repeating-linear-gradient(90deg,#c4c4c4 0 1px,transparent 1px 2px)"></div>
<div class="a" style="left:4.5px;top:152px;width:317.5px;height:24.5px;background:#eeeeee;border:1px solid #c3c3c3"></div>
<svg class="a" style="left:7px;top:157px" width="14" height="14" viewBox="0 0 14 14"><rect x="0.5" y="0.5" width="13" height="13" fill="#fff" stroke="#3a6fd8"/><rect x="1" y="1" width="12" height="2.2" fill="#7fb4f5"/><rect x="1" y="3" width="2" height="10" fill="#cfe3fb"/><text x="7.4" y="10.9" font-family="Liberation Serif,serif" font-style="italic" font-size="10.5" text-anchor="middle" fill="#111">f</text></svg>
<span class="t" style="left:26px;top:156px;font-size:12.5px">Functions</span>
<svg class="a" style="left:262px;top:160px" width="54" height="10" viewBox="0 0 54 10"><rect x="0.6" y="0.6" width="6.8" height="8.3" fill="#f4f4f4" stroke="#555" stroke-width="0.9"/><rect x="0.6" y="0.3" width="6.8" height="1.3" fill="#444"/><rect x="21.6" y="0.6" width="8.8" height="8.3" rx="2" fill="#f0f0f0" stroke="#666" stroke-width="0.9"/><circle cx="24.8" cy="5.5" r="1.8" fill="none" stroke="#666" stroke-width="0.8"/><circle cx="27.2" cy="4" r="1.8" fill="none" stroke="#666" stroke-width="0.8"/><rect x="43.6" y="0.6" width="8.8" height="8.3" rx="1.6" fill="#f0f0f0" stroke="#555" stroke-width="0.9"/><path d="M45.6 2.4 L50.4 7.2 M50.4 2.4 L45.6 7.2" stroke="#444" stroke-width="1.4"/></svg>
<div class="a" style="left:4.5px;top:178px;width:317.5px;height:406px;background:#fff;border:1px solid #bdbdbd"></div>
<div class="a" style="left:5.5px;top:179px;width:304px;height:18.5px;background:linear-gradient(#fafafa,#ececec);border-bottom:1px solid #c6c6c6"></div>
<span class="t" style="left:7px;top:181px;font-size:12.4px">Function name</span>
<div class="a" style="left:309.5px;top:179px;width:11.5px;height:392.5px;background:#f1f1f1;border-left:1px solid #c9c9c9"></div>
<div class="a" style="left:309.5px;top:190px;width:11.5px;height:1px;background:#c9c9c9;"></div>
<svg class="a" style="left:312px;top:182px" width="7" height="5" viewBox="0 0 7 5"><path d="M0.3 4.4 L3.5 0.6 L6.7 4.4Z" fill="#3c3c3c"/></svg>
<div class="a" style="left:310.5px;top:191px;width:10.5px;height:180.2px;background:#f9f9f9;"></div>
<div class="a" style="left:310.5px;top:371.2px;width:10.5px;height:187.8px;background:#e5e5e5;border-top:1px solid #c4c4c4"></div>
<div class="a" style="left:309.5px;top:559px;width:11.5px;height:1px;background:#c9c9c9;"></div>
<svg class="a" style="left:312px;top:563px" width="7" height="5" viewBox="0 0 7 5"><path d="M0.3 0.6 L3.5 4.4 L6.7 0.6Z" fill="#3c3c3c"/></svg>
<div class="a" id="flist" style="left:5px;top:198.5px;width:304.5px;height:373px;overflow:hidden;background:#fff">
<div class="row" style="left:0;top:0.0px;background:#fff"><svg class="fi" viewBox="0 0 14 14"><rect x="0.5" y="0.5" width="13" height="13" fill="#fff" stroke="#3a6fd8"/><rect x="1" y="1" width="12" height="2.2" fill="#7fb4f5"/><rect x="1" y="3" width="2" height="10" fill="#cfe3fb"/><text x="7.4" y="10.9" font-family="Liberation Serif,serif" font-style="italic" font-size="10.5" text-anchor="middle" fill="#111">f</text></svg><span class="t" style="color:#1c1c1c;font-weight:normal">_init_proc</span></div>
<div class="row" style="left:0;top:17.5px;background:#fff"><svg class="fi" viewBox="0 0 14 14"><rect x="0.5" y="0.5" width="13" height="13" fill="#fff" stroke="#3a6fd8"/><rect x="1" y="1" width="12" height="2.2" fill="#7fb4f5"/><rect x="1" y="3" width="2" height="10" fill="#cfe3fb"/><text x="7.4" y="10.9" font-family="Liberation Serif,serif" font-style="italic" font-size="10.5" text-anchor="middle" fill="#111">f</text></svg><span class="t" style="color:#1c1c1c;font-weight:normal">sub_1020</span></div>
<div class="row" style="left:0;top:35.0px;background:#fff"><svg class="fi" viewBox="0 0 14 14"><rect x="0.5" y="0.5" width="13" height="13" fill="#fff" stroke="#3a6fd8"/><rect x="1" y="1" width="12" height="2.2" fill="#7fb4f5"/><rect x="1" y="3" width="2" height="10" fill="#cfe3fb"/><text x="7.4" y="10.9" font-family="Liberation Serif,serif" font-style="italic" font-size="10.5" text-anchor="middle" fill="#111">f</text></svg><span class="t" style="color:#1c1c1c;font-weight:normal">sub_1030</span></div>
<div class="row" style="left:0;top:52.5px;background:#fff"><svg class="fi" viewBox="0 0 14 14"><rect x="0.5" y="0.5" width="13" height="13" fill="#fff" stroke="#3a6fd8"/><rect x="1" y="1" width="12" height="2.2" fill="#7fb4f5"/><rect x="1" y="3" width="2" height="10" fill="#cfe3fb"/><text x="7.4" y="10.9" font-family="Liberation Serif,serif" font-style="italic" font-size="10.5" text-anchor="middle" fill="#111">f</text></svg><span class="t" style="color:#1c1c1c;font-weight:normal">sub_1040</span></div>
<div class="row" style="left:0;top:70.0px;background:#fff"><svg class="fi" viewBox="0 0 14 14"><rect x="0.5" y="0.5" width="13" height="13" fill="#fff" stroke="#3a6fd8"/><rect x="1" y="1" width="12" height="2.2" fill="#7fb4f5"/><rect x="1" y="3" width="2" height="10" fill="#cfe3fb"/><text x="7.4" y="10.9" font-family="Liberation Serif,serif" font-style="italic" font-size="10.5" text-anchor="middle" fill="#111">f</text></svg><span class="t" style="color:#1c1c1c;font-weight:normal">sub_1050</span></div>
<div class="row" style="left:0;top:87.5px;background:#fff"><svg class="fi" viewBox="0 0 14 14"><rect x="0.5" y="0.5" width="13" height="13" fill="#fff" stroke="#3a6fd8"/><rect x="1" y="1" width="12" height="2.2" fill="#7fb4f5"/><rect x="1" y="3" width="2" height="10" fill="#cfe3fb"/><text x="7.4" y="10.9" font-family="Liberation Serif,serif" font-style="italic" font-size="10.5" text-anchor="middle" fill="#111">f</text></svg><span class="t" style="color:#1c1c1c;font-weight:normal">sub_1060</span></div>
<div class="row" style="left:0;top:105.0px;background:#fff"><svg class="fi" viewBox="0 0 14 14"><rect x="0.5" y="0.5" width="13" height="13" fill="#fff" stroke="#3a6fd8"/><rect x="1" y="1" width="12" height="2.2" fill="#7fb4f5"/><rect x="1" y="3" width="2" height="10" fill="#cfe3fb"/><text x="7.4" y="10.9" font-family="Liberation Serif,serif" font-style="italic" font-size="10.5" text-anchor="middle" fill="#111">f</text></svg><span class="t" style="color:#1c1c1c;font-weight:normal">sub_1070</span></div>
<div class="row" style="left:0;top:122.5px;background:#fff"><svg class="fi" viewBox="0 0 14 14"><rect x="0.5" y="0.5" width="13" height="13" fill="#fff" stroke="#3a6fd8"/><rect x="1" y="1" width="12" height="2.2" fill="#7fb4f5"/><rect x="1" y="3" width="2" height="10" fill="#cfe3fb"/><text x="7.4" y="10.9" font-family="Liberation Serif,serif" font-style="italic" font-size="10.5" text-anchor="middle" fill="#111">f</text></svg><span class="t" style="color:#1c1c1c;font-weight:normal">sub_1080</span></div>
<div class="row" style="left:0;top:140.0px;background:#fff"><svg class="fi" viewBox="0 0 14 14"><rect x="0.5" y="0.5" width="13" height="13" fill="#fff" stroke="#3a6fd8"/><rect x="1" y="1" width="12" height="2.2" fill="#7fb4f5"/><rect x="1" y="3" width="2" height="10" fill="#cfe3fb"/><text x="7.4" y="10.9" font-family="Liberation Serif,serif" font-style="italic" font-size="10.5" text-anchor="middle" fill="#111">f</text></svg><span class="t" style="color:#1c1c1c;font-weight:normal">sub_1090</span></div>
<div class="row" style="left:0;top:157.5px;background:#fff"><svg class="fi" viewBox="0 0 14 14"><rect x="0.5" y="0.5" width="13" height="13" fill="#fff" stroke="#3a6fd8"/><rect x="1" y="1" width="12" height="2.2" fill="#7fb4f5"/><rect x="1" y="3" width="2" height="10" fill="#cfe3fb"/><text x="7.4" y="10.9" font-family="Liberation Serif,serif" font-style="italic" font-size="10.5" text-anchor="middle" fill="#111">f</text></svg><span class="t" style="color:#1c1c1c;font-weight:normal">sub_10A0</span></div>
<div class="row" style="left:0;top:175.0px;background:#308cc6"><svg class="fi" viewBox="0 0 14 14"><rect x="0.5" y="0.5" width="13" height="13" fill="#fff" stroke="#3a6fd8"/><rect x="1" y="1" width="12" height="2.2" fill="#7fb4f5"/><rect x="1" y="3" width="2" height="10" fill="#cfe3fb"/><text x="7.4" y="10.9" font-family="Liberation Serif,serif" font-style="italic" font-size="10.5" text-anchor="middle" fill="#111">f</text></svg><span class="t" style="color:#fff;font-weight:normal">sub_10B0</span></div>
<div class="row" style="left:0;top:192.5px;background:#ffe6ff"><svg class="fi" viewBox="0 0 14 14"><rect x="0.5" y="0.5" width="13" height="13" fill="#fff" stroke="#3a6fd8"/><rect x="1" y="1" width="12" height="2.2" fill="#7fb4f5"/><rect x="1" y="3" width="2" height="10" fill="#cfe3fb"/><text x="7.4" y="10.9" font-family="Liberation Serif,serif" font-style="italic" font-size="10.5" text-anchor="middle" fill="#111">f</text></svg><span class="t" style="color:#1c1c1c;font-weight:bold;font-size:11.8px">__cxa_finalize</span></div>
<div class="row" style="left:0;top:210.0px;background:#ffe6ff"><svg class="fi" viewBox="0 0 14 14"><rect x="0.5" y="0.5" width="13" height="13" fill="#fff" stroke="#3a6fd8"/><rect x="1" y="1" width="12" height="2.2" fill="#7fb4f5"/><rect x="1" y="3" width="2" height="10" fill="#cfe3fb"/><text x="7.4" y="10.9" font-family="Liberation Serif,serif" font-style="italic" font-size="10.5" text-anchor="middle" fill="#111">f</text></svg><span class="t" style="color:#1c1c1c;font-weight:bold;font-size:11.8px">_putchar</span></div>
<div class="row" style="left:0;top:227.5px;background:#ffe6ff"><svg class="fi" viewBox="0 0 14 14"><rect x="0.5" y="0.5" width="13" height="13" fill="#fff" stroke="#3a6fd8"/><rect x="1" y="1" width="12" height="2.2" fill="#7fb4f5"/><rect x="1" y="3" width="2" height="10" fill="#cfe3fb"/><text x="7.4" y="10.9" font-family="Liberation Serif,serif" font-style="italic" font-size="10.5" text-anchor="middle" fill="#111">f</text></svg><span class="t" style="color:#1c1c1c;font-weight:bold;font-size:11.8px">_puts</span></div>
<div class="row" style="left:0;top:245.0px;background:#ffe6ff"><svg class="fi" viewBox="0 0 14 14"><rect x="0.5" y="0.5" width="13" height="13" fill="#fff" stroke="#3a6fd8"/><rect x="1" y="1" width="12" height="2.2" fill="#7fb4f5"/><rect x="1" y="3" width="2" height="10" fill="#cfe3fb"/><text x="7.4" y="10.9" font-family="Liberation Serif,serif" font-style="italic" font-size="10.5" text-anchor="middle" fill="#111">f</text></svg><span class="t" style="color:#1c1c1c;font-weight:bold;font-size:11.8px">_printf</span></div>
<div class="row" style="left:0;top:262.5px;background:#ffe6ff"><svg class="fi" viewBox="0 0 14 14"><rect x="0.5" y="0.5" width="13" height="13" fill="#fff" stroke="#3a6fd8"/><rect x="1" y="1" width="12" height="2.2" fill="#7fb4f5"/><rect x="1" y="3" width="2" height="10" fill="#cfe3fb"/><text x="7.4" y="10.9" font-family="Liberation Serif,serif" font-style="italic" font-size="10.5" text-anchor="middle" fill="#111">f</text></svg><span class="t" style="color:#1c1c1c;font-weight:bold;font-size:11.8px">_nanosleep</span></div>
<div class="row" style="left:0;top:280.0px;background:#ffe6ff"><svg class="fi" viewBox="0 0 14 14"><rect x="0.5" y="0.5" width="13" height="13" fill="#fff" stroke="#3a6fd8"/><rect x="1" y="1" width="12" height="2.2" fill="#7fb4f5"/><rect x="1" y="3" width="2" height="10" fill="#cfe3fb"/><text x="7.4" y="10.9" font-family="Liberation Serif,serif" font-style="italic" font-size="10.5" text-anchor="middle" fill="#111">f</text></svg><span class="t" style="color:#1c1c1c;font-weight:bold;font-size:11.8px">_fflush</span></div>
<div class="row" style="left:0;top:297.5px;background:#ffe6ff"><svg class="fi" viewBox="0 0 14 14"><rect x="0.5" y="0.5" width="13" height="13" fill="#fff" stroke="#3a6fd8"/><rect x="1" y="1" width="12" height="2.2" fill="#7fb4f5"/><rect x="1" y="3" width="2" height="10" fill="#cfe3fb"/><text x="7.4" y="10.9" font-family="Liberation Serif,serif" font-style="italic" font-size="10.5" text-anchor="middle" fill="#111">f</text></svg><span class="t" style="color:#1c1c1c;font-weight:normal">___isoc99_scanf</span></div>
<div class="row" style="left:0;top:315.0px;background:#ffe6ff"><svg class="fi" viewBox="0 0 14 14"><rect x="0.5" y="0.5" width="13" height="13" fill="#fff" stroke="#3a6fd8"/><rect x="1" y="1" width="12" height="2.2" fill="#7fb4f5"/><rect x="1" y="3" width="2" height="10" fill="#cfe3fb"/><text x="7.4" y="10.9" font-family="Liberation Serif,serif" font-style="italic" font-size="10.5" text-anchor="middle" fill="#111">f</text></svg><span class="t" style="color:#1c1c1c;font-weight:bold;font-size:11.8px">_atoi</span></div>
<div class="row" style="left:0;top:332.5px;background:#ffe6ff"><svg class="fi" viewBox="0 0 14 14"><rect x="0.5" y="0.5" width="13" height="13" fill="#fff" stroke="#3a6fd8"/><rect x="1" y="1" width="12" height="2.2" fill="#7fb4f5"/><rect x="1" y="3" width="2" height="10" fill="#cfe3fb"/><text x="7.4" y="10.9" font-family="Liberation Serif,serif" font-style="italic" font-size="10.5" text-anchor="middle" fill="#111">f</text></svg><span class="t" style="color:#1c1c1c;font-weight:bold;font-size:11.8px">_exit</span></div>
<div class="row" style="left:0;top:350.0px;background:#ffe6ff"><svg class="fi" viewBox="0 0 14 14"><rect x="0.5" y="0.5" width="13" height="13" fill="#fff" stroke="#3a6fd8"/><rect x="1" y="1" width="12" height="2.2" fill="#7fb4f5"/><rect x="1" y="3" width="2" height="10" fill="#cfe3fb"/><text x="7.4" y="10.9" font-family="Liberation Serif,serif" font-style="italic" font-size="10.5" text-anchor="middle" fill="#111">f</text></svg><span class="t" style="color:#1c1c1c;font-weight:bold;font-size:11.8px">_sleep</span></div>
<div class="row" style="left:0;top:367.5px;background:#fff"><svg class="fi" viewBox="0 0 14 14"><rect x="0.5" y="0.5" width="13" height="13" fill="#fff" stroke="#3a6fd8"/><rect x="1" y="1" width="12" height="2.2" fill="#7fb4f5"/><rect x="1" y="3" width="2" height="10" fill="#cfe3fb"/><text x="7.4" y="10.9" font-family="Liberation Serif,serif" font-style="italic" font-size="10.5" text-anchor="middle" fill="#111">f</text></svg><span class="t" style="color:#1c1c1c;font-weight:normal">_start</span></div>
</div>
<div class="a" style="left:5.5px;top:571.5px;width:315.5px;height:11.5px;background:#f1f1f1;border-top:1px solid #c9c9c9"></div>
<svg class="a" style="left:8px;top:574px" width="5" height="7" viewBox="0 0 5 7"><path d="M4.4 0.3 L0.6 3.5 L4.4 6.7Z" fill="#3c3c3c"/></svg>
<div class="a" style="left:16px;top:572.5px;width:74px;height:10.5px;background:#fbfbfb;border-left:1px solid #c9c9c9;border-right:1px solid #c9c9c9"></div>
<div class="a" style="left:90px;top:572.5px;width:207px;height:10.5px;background:#e6e6e6;"></div>
<div class="a" style="left:297px;top:572.5px;width:1px;height:10.5px;background:#c9c9c9;"></div>
<svg class="a" style="left:300.5px;top:574px" width="5" height="7" viewBox="0 0 5 7"><path d="M0.6 0.3 L4.4 3.5 L0.6 6.7Z" fill="#3c3c3c"/></svg>
<div class="a" style="left:309.5px;top:572.5px;width:1px;height:10.5px;background:#c9c9c9;"></div>
<span class="t" style="left:9px;top:586.5px;font-size:12px">Line 11 of 43</span>
<div class="a" style="left:157px;top:605px;width:14px;height:1px;background:transparent;background-image:repeating-linear-gradient(90deg,#c4c4c4 0 1px,transparent 1px 2px)"></div>
<div class="a" style="left:4.5px;top:608px;width:317.5px;height:24.5px;background:#eeeeee;border:1px solid #c3c3c3"></div>
<svg class="a" style="left:7px;top:613px" width="14" height="13" viewBox="0 0 14 13"><g fill="#2b62c8"><rect x="5" y="0" width="4" height="3.5"/><rect x="0.5" y="8.5" width="3.5" height="4"/><rect x="5.2" y="8.5" width="3.5" height="4"/><rect x="10" y="8.5" width="3.5" height="4"/></g><path d="M7 3.5 V8.5 M2.2 8.5 V6 H11.8 V8.5" stroke="#2b62c8" stroke-width="1" fill="none"/></svg>
<span class="t" style="left:26px;top:612.3px;font-size:12.35px">Graph overview</span>
<svg class="a" style="left:262px;top:616px" width="54" height="10" viewBox="0 0 54 10"><rect x="0.6" y="0.6" width="6.8" height="8.3" fill="#f4f4f4" stroke="#555" stroke-width="0.9"/><rect x="0.6" y="0.3" width="6.8" height="1.3" fill="#444"/><rect x="21.6" y="0.6" width="8.8" height="8.3" rx="2" fill="#f0f0f0" stroke="#666" stroke-width="0.9"/><circle cx="24.8" cy="5.5" r="1.8" fill="none" stroke="#666" stroke-width="0.8"/><circle cx="27.2" cy="4" r="1.8" fill="none" stroke="#666" stroke-width="0.8"/><rect x="43.6" y="0.6" width="8.8" height="8.3" rx="1.6" fill="#f0f0f0" stroke="#555" stroke-width="0.9"/><path d="M45.6 2.4 L50.4 7.2 M50.4 2.4 L45.6 7.2" stroke="#444" stroke-width="1.4"/></svg>
<div class="a" style="left:5px;top:633px;width:316.5px;height:88.5px;background:linear-gradient(#ffffff,#e9f6fd 55%,#dff2fc);"></div>
<svg class="a" style="left:110px;top:633.3px" width="110" height="90" viewBox="0 0 110 90">
<path d="M60 31.5 H97.5 V86.5 H51" stroke="#3a3aff" stroke-width="1" fill="none"/>
<path d="M19.7 62 V66.4 H97" stroke="#3a3aff" stroke-width="0.8" fill="none"/>
<rect x="22.5" y="3.5" width="81" height="30.5" fill="none" stroke="#222" stroke-width="1" stroke-dasharray="1 1.6"/>
<rect x="45.5" y="1.5" width="32" height="29" fill="#fff" stroke="#111" stroke-width="1.2"/>
<rect x="55.5" y="32.5" width="12" height="3.5" fill="#fff" stroke="#111" stroke-width="0.9"/>
<path d="M50 37.5 H58" stroke="#1c8c1c" stroke-width="1"/><path d="M63 37.5 H72" stroke="#d23a1a" stroke-width="1"/>
<rect x="35.5" y="39.5" width="32" height="12" fill="#fff" stroke="#111" stroke-width="1.1"/>
<rect x="67.5" y="39.5" width="10" height="7" fill="#fff" stroke="#111" stroke-width="0.9"/>
<rect x="32.500" y="53" width="8" height="3.5" fill="#fff" stroke="#111" stroke-width="0.9"/>
<rect x="62.500" y="53" width="8" height="3.5" fill="#fff" stroke="#111" stroke-width="0.9"/>
<path d="M20 57.5 H34" stroke="#d23a1a" stroke-width="1"/><path d="M36 57.500 H50" stroke="#1c8c1c" stroke-width="1"/><path d="M66 57.5 H76" stroke="#d23a1a" stroke-width="1"/><path d="M76 57.5 H96" stroke="#1c8c1c" stroke-width="0.8"/>
<rect x="7.500" y="59" width="27" height="4" fill="#fff" stroke="#111" stroke-width="0.9"/>
<rect x="34.500" y="58.5" width="32" height="7" fill="#fff" stroke="#111" stroke-width="1.1"/>
<rect x="66.500" y="58.500" width="29" height="7" fill="#fff" stroke="#111" stroke-width="1.100"/>
<path d="M50 66.500 H82" stroke="#2a7a2a" stroke-width="0.8"/>
<rect x="36.500" y="67.500" width="32" height="18" fill="#fff" stroke="#111" stroke-width="1.200"/>
</svg>
<div class="a" style="left:325px;top:177px;width:1271px;height:1px;background:#c4c4c4;"></div>
<div class="a" style="left:325.5px;top:154px;width:180.8px;height:23px;background:linear-gradient(#e2e2e2,#dcdcdc);border:1px solid #c6c6c6;border-bottom:none;border-radius:3px 3px 0 0"></div>
<svg class="a" style="left:335.3px;top:158.2px" width="13.5" height="13" viewBox="0 0 15 14"><rect x="0.5" y="0.5" width="9" height="10" fill="#fff" stroke="#3a6fd8"/><rect x="1" y="1" width="8" height="2" fill="#7fb4f5"/><rect x="4.500" y="3.500" width="10" height="10" fill="#fff" stroke="#3a6fd8"/><rect x="5" y="4" width="9" height="2" fill="#7fb4f5"/><path d="M7 8 H12 M7 10 H12 M7 12 H11" stroke="#6b7fb0" stroke-width="0.8"/></svg>
<span class="t" style="left:354.5px;top:158.5px;width:120px;text-align:center;font-size:12.4px">IDA View-A</span>
<svg class="a" style="left:483.5px;top:161.500px" width="9" height="8" viewBox="0 0 9 8"><path d="M1 0.800 L8 7.200 M8 0.800 L1 7.200" stroke="#868686" stroke-width="2"/></svg>
<div class="a" style="left:506.9px;top:154px;width:180.8px;height:23px;background:linear-gradient(#e2e2e2,#dcdcdc);border:1px solid #c6c6c6;border-bottom:none;border-radius:3px 3px 0 0"></div>
<svg class="a" style="left:516.6px;top:158.2px" width="13.5" height="13" viewBox="0 0 15 14"><rect x="0.5" y="0.5" width="13" height="13" fill="#fff" stroke="#3a6fd8"/><rect x="1" y="1" width="12" height="2.200" fill="#7fb4f5"/><ellipse cx="7" cy="8.3" rx="3.8" ry="3.300" fill="none" stroke="#2d50c8" stroke-width="1.3"/></svg>
<span class="t" style="left:535.9px;top:158.5px;width:120px;text-align:center;font-size:12.4px">Hex View-1</span>
<svg class="a" style="left:664.9px;top:161.500px" width="9" height="8" viewBox="0 0 9 8"><path d="M1 0.800 L8 7.200 M8 0.800 L1 7.200" stroke="#868686" stroke-width="2"/></svg>
<div class="a" style="left:687.7px;top:152px;width:182.3px;height:26.5px;background:#f5f5f5;border:1px solid #c0c0c0;border-bottom:none;border-radius:3px 3px 0 0"></div>
<svg class="a" style="left:698.0px;top:158.2px" width="13.5" height="13" viewBox="0 0 15 14"><rect x="0.5" y="0.5" width="9" height="10" fill="#fff" stroke="#3a6fd8"/><rect x="1" y="1" width="8" height="2" fill="#7fb4f5"/><rect x="4.500" y="3.500" width="10" height="10" fill="#fff" stroke="#3a6fd8"/><rect x="5" y="4" width="9" height="2" fill="#7fb4f5"/><path d="M7 8 H12 M7 10 H12 M7 12 H11" stroke="#6b7fb0" stroke-width="0.8"/></svg>
<span class="t" style="left:717.2px;top:158.5px;width:120px;text-align:center;font-size:12.4px">Pseudocode-A</span>
<svg class="a" style="left:846.2px;top:161.500px" width="9" height="8" viewBox="0 0 9 8"><path d="M1 0.800 L8 7.200 M8 0.800 L1 7.200" stroke="#868686" stroke-width="2"/></svg>
<div class="a" style="left:869.5px;top:154px;width:180.8px;height:23px;background:linear-gradient(#e2e2e2,#dcdcdc);border:1px solid #c6c6c6;border-bottom:none;border-radius:3px 3px 0 0"></div>
<svg class="a" style="left:879.3px;top:158.2px" width="13.5" height="13" viewBox="0 0 15 14"><rect x="0.5" y="0.5" width="13" height="13" fill="#fff" stroke="#3a6fd8"/><rect x="1" y="1" width="12" height="2.200" fill="#7fb4f5"/><text x="7" y="12.200" font-family="Liberation Sans,sans-serif" font-weight="bold" font-size="10" text-anchor="middle" fill="#1b2f9a">A</text></svg>
<span class="t" style="left:898.5px;top:158.5px;width:120px;text-align:center;font-size:12.4px">Structures</span>
<svg class="a" style="left:1027.5px;top:161.500px" width="9" height="8" viewBox="0 0 9 8"><path d="M1 0.800 L8 7.200 M8 0.800 L1 7.200" stroke="#868686" stroke-width="2"/></svg>
<div class="a" style="left:1050.9px;top:154px;width:180.8px;height:23px;background:linear-gradient(#e2e2e2,#dcdcdc);border:1px solid #c6c6c6;border-bottom:none;border-radius:3px 3px 0 0"></div>
<svg class="a" style="left:1060.7px;top:158.2px" width="13.5" height="13" viewBox="0 0 15 14"><rect x="0.5" y="0.5" width="13" height="13" fill="#fff" stroke="#3a6fd8"/><rect x="1" y="1" width="12" height="2.200" fill="#7fb4f5"/><path d="M3 6 H5 M3 8.500 H5 M3 11 H5" stroke="#2d50c8" stroke-width="1.300"/><path d="M6.500 6 H11 M6.500 8.500 H11 M6.500 11 H11" stroke="#2d50c8" stroke-width="1" stroke-dasharray="1.200 0.800"/></svg>
<span class="t" style="left:1079.9px;top:158.5px;width:120px;text-align:center;font-size:12.4px">Enums</span>
<svg class="a" style="left:1208.9px;top:161.500px" width="9" height="8" viewBox="0 0 9 8"><path d="M1 0.800 L8 7.200 M8 0.800 L1 7.200" stroke="#868686" stroke-width="2"/></svg>
<div class="a" style="left:1232.2px;top:154px;width:180.8px;height:23px;background:linear-gradient(#e2e2e2,#dcdcdc);border:1px solid #c6c6c6;border-bottom:none;border-radius:3px 3px 0 0"></div>
<svg class="a" style="left:1242.0px;top:158.2px" width="13.5" height="13" viewBox="0 0 15 14"><rect x="0.5" y="0.5" width="13" height="13" fill="#fff" stroke="#3a6fd8"/><rect x="1" y="1" width="12" height="2.200" fill="#7fb4f5"/><rect x="2.500" y="5" width="4" height="6" fill="#dfe9fb" stroke="#3a6fd8" stroke-width="0.700"/><path d="M12 6 H8 M9.500 4.500 L8 6 L9.500 7.500" stroke="#1c9a2a" stroke-width="1.100" fill="none"/><path d="M8 10 H12" stroke="#3a6fd8" stroke-width="0.900"/></svg>
<span class="t" style="left:1261.2px;top:158.5px;width:120px;text-align:center;font-size:12.4px">Imports</span>
<svg class="a" style="left:1390.2px;top:161.500px" width="9" height="8" viewBox="0 0 9 8"><path d="M1 0.800 L8 7.200 M8 0.800 L1 7.200" stroke="#868686" stroke-width="2"/></svg>
<div class="a" style="left:1413.6px;top:154px;width:180.8px;height:23px;background:linear-gradient(#e2e2e2,#dcdcdc);border:1px solid #c6c6c6;border-bottom:none;border-radius:3px 3px 0 0"></div>
<svg class="a" style="left:1423.4px;top:158.2px" width="13.5" height="13" viewBox="0 0 15 14"><rect x="0.5" y="0.5" width="13" height="13" fill="#fff" stroke="#3a6fd8"/><rect x="1" y="1" width="12" height="2.200" fill="#7fb4f5"/><rect x="2.500" y="5" width="4" height="6" fill="#dfe9fb" stroke="#3a6fd8" stroke-width="0.700"/><path d="M8 6 H12 M10.500 4.500 L12 6 L10.500 7.500" stroke="#1c9a2a" stroke-width="1.100" fill="none"/><path d="M8 10 H12" stroke="#3a6fd8" stroke-width="0.900"/></svg>
<span class="t" style="left:1442.6px;top:158.5px;width:120px;text-align:center;font-size:12.4px">Exports</span>
<svg class="a" style="left:1571.6px;top:161.500px" width="9" height="8" viewBox="0 0 9 8"><path d="M1 0.800 L8 7.200 M8 0.800 L1 7.200" stroke="#868686" stroke-width="2"/></svg>
<div class="a" style="left:324.6px;top:178.5px;width:1271px;height:542px;background:#fff;"></div>
<div class="a" style="left:324.3px;top:178.5px;width:0.6px;height:542px;background:#f6f6f6;"></div>
<div class="a" style="left:356.2px;top:179px;width:2.1px;height:541px;background:#ececec;"></div>
<div class="a" style="left:358.3px;top:179px;width:1.4px;height:541px;background:#c2c2c2;"></div>
<div class="a" style="left:359.5px;top:178px;width:1236px;height:1.5px;background:#f0f0f0;"></div>
<div class="a" style="left:359.5px;top:179.5px;width:1236px;height:11.2px;background:#e3e3e3;"></div>
<div class="a" style="left:359.5px;top:703px;width:1235.5px;height:16.5px;background:#efefef;border-bottom:1px solid #cfcfcf"></div>
<span class="t" style="left:362px;top:703px;font-family:'DejaVu Sans Mono','Liberation Mono',monospace;font-size:12px;color:#6a6a6a;letter-spacing:0.01px">0000144F main:1 (144F)</span>
<div class="a" style="left:491px;top:343px;width:600px;height:130px;line-height:130px;font-size:109px;font-weight:bold;color:#f3f3f3;-webkit-text-stroke:2.5px #f3f3f3;white-space:pre;transform:rotate(-29.500deg);transform-origin:50% 50%;text-align:center;letter-spacing:1px">codeby.net</div>
<div class="ln" style="top:180.30px">1</div><div class="code" style="top:180.30px"><span class="k">int __fastcall main(int argc, const char **argv, const char **envp)</span></div>
<div class="ln" style="top:191.97px">2</div><div class="code" style="top:191.97px"><span class="k">{</span></div>
<div class="ln" style="top:203.63px">3</div><div class="code" style="top:203.63px"><span class="k">  char nptr[4]; </span><span class="f">// </span><span class="c">[rsp+Ch] [rbp-14h] BYREF</span></div>
<div class="ln" style="top:215.30px">4</div><div class="code" style="top:215.30px"><span class="k">  unsigned int v5; </span><span class="f">// </span><span class="c">[rsp+10h] [rbp-10h]</span></div>
<div class="ln" style="top:226.97px">5</div><div class="code" style="top:226.97px"><span class="k">  unsigned int v6; </span><span class="f">// </span><span class="c">[rsp+14h] [rbp-Ch]</span></div>
<div class="ln" style="top:238.64px">6</div><div class="code" style="top:238.64px"><span class="g">  char v7; </span><span class="f">// </span><span class="c">[rsp+1Ah] [rbp-6h]</span></div>
<div class="ln" style="top:250.30px">7</div><div class="code" style="top:250.30px"><span class="g">  char v8; </span><span class="f">// </span><span class="c">[rsp+1Bh] [rbp-5h]</span></div>
<div class="ln" style="top:261.97px">8</div><div class="code" style="top:261.97px"><span class="g">  int i; </span><span class="f">// </span><span class="c">[rsp+1Ch] [rbp-4h]</span></div>
<div class="ln" style="top:273.64px">9</div>
<div class="ln" style="top:285.30px">10</div><div class="dot" style="top:286.10px"></div><div class="code" style="top:285.30px"><span class="c">  v8</span><span class="k"> = 0;</span></div>
<div class="ln" style="top:296.97px">11</div><div class="dot" style="top:297.77px"></div><div class="code" style="top:296.97px"><span class="c">  v7</span><span class="k"> = 5;</span></div>
<div class="ln" style="top:308.64px">12</div><div class="dot" style="top:309.44px"></div><div class="code" style="top:308.64px"><span class="c">  v6</span><span class="k"> = 10;</span></div>
<div class="ln" style="top:320.30px">13</div><div class="dot" style="top:321.10px"></div><div class="code" style="top:320.30px"><span class="k">  *(</span><span class="g">_DWORD *</span><span class="k">)</span><span class="c">nptr</span><span class="k"> = 0;</span></div>
<div class="ln" style="top:331.97px">14</div><div class="dot" style="top:332.77px"></div><div class="code" style="top:331.97px"><span class="f">  print_logo</span><span class="k">(</span><span class="c">argc</span><span class="k">, </span><span class="c">argv</span><span class="k">, </span><span class="c">envp</span><span class="k">);</span></div>
<div class="ln" style="top:343.64px">15</div><div class="dot" style="top:344.44px"></div><div class="code" style="top:343.64px"><span class="f">  puts</span><span class="k">(</span><span class="s">&quot;\nThis is a program for adjusting the volume on the server.&quot;</span><span class="k">);</span></div>
<div class="ln" style="top:355.31px">16</div><div class="dot" style="top:356.11px"></div><div class="code" style="top:355.31px"><span class="f">  puts</span><span class="k">(</span><span class="s">&quot;It was developed by the best UX and UI masters.\n&quot;</span><span class="k">);</span></div>
<div class="ln" style="top:366.97px">17</div><div class="dot" style="top:367.77px"></div><div class="code" style="top:366.97px"><span class="f">  sleep</span><span class="k">(2u);</span></div>
<div class="ln" style="top:378.64px">18</div><div class="dot" style="top:379.44px"></div><div class="code" style="top:378.64px"><span class="k">  for ( </span><span class="c">i</span><span class="k"> = 0; </span><span class="c">i</span><span class="k"> &lt;= 99; ++</span><span class="c">i</span><span class="k"> )</span></div>
<div class="ln" style="top:390.31px">19</div><div class="code" style="top:390.31px"><span class="k">  {</span></div>
<div class="ln" style="top:401.97px">20</div><div class="dot" style="top:402.77px"></div><div class="code" style="top:401.97px"><span class="f">    puts</span><span class="k">(</span><span class="s">&quot;You can only change the volume 2 times.&quot;</span><span class="k">);</span></div>
<div class="ln" style="top:413.64px">21</div><div class="dot" style="top:414.44px"></div><div class="code" style="top:413.64px"><span class="f">    puts</span><span class="k">(</span><span class="s">&quot;You can buy premium on our website (200$) to be able to change the volume 100 times.&quot;</span><span class="k">);</span></div>
<div class="ln" style="top:425.31px">22</div><div class="dot" style="top:426.11px"></div><div class="code" style="top:425.31px"><span class="f">    sleep</span><span class="k">(2u);</span></div>
<div class="ln" style="top:436.97px">23</div><div class="dot" style="top:437.77px"></div><div class="code" style="top:436.97px"><span class="k">    if ( </span><span class="c">v8</span><span class="k"> != 1 )</span></div>
<div class="ln" style="top:448.64px">24</div><div class="code" style="top:448.64px"><span class="k">    {</span></div>
<div class="ln" style="top:460.31px">25</div><div class="dot" style="top:461.11px"></div><div class="code" style="top:460.31px"><span class="k">      if ( </span><span class="c">i</span><span class="k"> &gt; 1 )</span></div>
<div class="ln" style="top:471.98px">26</div><div class="code" style="top:471.98px"><span class="k">      {</span></div>
<div class="ln" style="top:483.64px">27</div><div class="dot" style="top:484.44px"></div><div class="code" style="top:483.64px"><span class="f">        puts</span><span class="k">(</span><span class="s">&quot;The limit is over. Buy the premium version..&quot;</span><span class="k">);</span></div>
<div class="ln" style="top:495.31px">28</div><div class="dot" style="top:496.11px"></div><div class="code" style="top:495.31px"><span class="f">        exit</span><span class="k">(0);</span></div>
<div class="ln" style="top:506.98px">29</div><div class="code" style="top:506.98px"><span class="k">      }</span></div>
<div class="ln" style="top:518.64px">30</div><div class="dot" style="top:519.44px"></div><div class="code" style="top:518.64px"><span class="f">      puts</span><span class="k">(</span><span class="s">&quot;Now you have the version: FREE&quot;</span><span class="k">);</span></div>
<div class="ln" style="top:530.31px">31</div><div class="code" style="top:530.31px"><span class="k">    }</span></div>
<div class="ln" style="top:541.98px">32</div><div class="dot" style="top:542.78px"></div><div class="code" style="top:541.98px"><span class="k">    else if ( </span><span class="c">v8</span><span class="k"> )</span></div>
<div class="ln" style="top:553.64px">33</div><div class="code" style="top:553.64px"><span class="k">    {</span></div>
<div class="ln" style="top:565.31px">34</div><div class="dot" style="top:566.11px"></div><div class="code" style="top:565.31px"><span class="f">      puts</span><span class="k">(</span><span class="s">&quot;Now you have the version: PREMIUM&quot;</span><span class="k">);</span></div>
<div class="ln" style="top:576.98px">35</div><div class="dot" style="top:577.78px"></div><div class="code" style="top:576.98px"><span class="f">      print_flag</span><span class="k">((</span><span class="g">unsigned int</span><span class="k">)</span><span class="c">v7</span><span class="k">, </span><span class="c">v6</span><span class="k">);</span></div>
<div class="ln" style="top:588.64px">36</div><div class="code" style="top:588.64px"><span class="k">    }</span></div>
<div class="ln" style="top:600.31px">37</div><div class="dot" style="top:601.11px"></div><div class="code" style="top:600.31px"><span class="f">    sleep</span><span class="k">(2u);</span></div>
<div class="ln" style="top:611.98px">38</div><div class="dot" style="top:612.78px"></div><div class="code" style="top:611.98px"><span class="f">    printf</span><span class="k">(</span><span class="s">&quot;Enter the desired volume value (0-100): &quot;</span><span class="k">);</span></div>
<div class="ln" style="top:623.65px">39</div><div class="dot" style="top:624.45px"></div><div class="code" style="top:623.65px"><span class="f">    __isoc99_scanf</span><span class="k">(</span><span class="s">&quot;%s&quot;</span><span class="k">, </span><span class="c">nptr</span><span class="k">);</span></div>
<div class="ln" style="top:635.31px">40</div><div class="dot" style="top:636.11px"></div><div class="code" style="top:635.31px"><span class="c">    v5</span><span class="k"> = atoi(</span><span class="c">nptr</span><span class="k">);</span></div>
<div class="ln" style="top:646.98px">41</div><div class="dot" style="top:647.78px"></div><div class="code" style="top:646.98px"><span class="f">    show_volume</span><span class="k">(</span><span class="c">v5</span><span class="k">);</span></div>
<div class="ln" style="top:658.65px">42</div><div class="code" style="top:658.65px"><span class="k">  }</span></div>
<div class="ln" style="top:670.31px">43</div><div class="dot" style="top:671.11px"></div><div class="code" style="top:670.31px"><span class="k">  return 0;</span></div>
<div class="ln" style="top:681.98px">44</div><div class="dot" style="top:682.78px"></div><div class="code" style="top:681.98px"><span class="k">}</span></div>
<div class="a" style="left:4px;top:721.5px;width:1592px;height:1.5px;background:#d2d2d2;"></div>
<div class="a" style="left:795px;top:721.5px;width:14px;height:1px;background:transparent;background-image:repeating-linear-gradient(90deg,#c4c4c4 0 1px,transparent 1px 2px)"></div>
<div class="a" style="left:4.5px;top:723.5px;width:1590.5px;height:24.5px;background:#eeeeee;border:1px solid #c6c6c6"></div>
<svg class="a" style="left:8px;top:729px" width="13" height="14" viewBox="0 0 13 14"><rect x="0.5" y="0.5" width="11.500" height="12.500" fill="#fff" stroke="#8794b0"/><rect x="1" y="1" width="11" height="2.400" fill="#3f86ee"/><path d="M3 6 H9 M3 8 H9 M3 10 H8" stroke="#7d8aa8" stroke-width="0.9"/></svg>
<span class="t" style="left:26px;top:727.5px;font-size:12.5px">Output</span>
<svg class="a" style="left:1536px;top:732px" width="54" height="10" viewBox="0 0 54 10"><rect x="0.6" y="0.6" width="6.8" height="8.3" fill="#f4f4f4" stroke="#555" stroke-width="0.9"/><rect x="0.6" y="0.3" width="6.8" height="1.3" fill="#444"/><rect x="21.6" y="0.6" width="8.8" height="8.3" rx="2" fill="#f0f0f0" stroke="#666" stroke-width="0.9"/><circle cx="24.8" cy="5.5" r="1.8" fill="none" stroke="#666" stroke-width="0.8"/><circle cx="27.2" cy="4" r="1.8" fill="none" stroke="#666" stroke-width="0.8"/><rect x="43.6" y="0.6" width="8.8" height="8.3" rx="1.6" fill="#f0f0f0" stroke="#555" stroke-width="0.9"/><path d="M45.6 2.4 L50.4 7.2 M50.4 2.4 L45.6 7.2" stroke="#444" stroke-width="1.4"/></svg>
<div class="a" style="left:4.5px;top:749.5px;width:1590.5px;height:30.5px;background:#fff;border:1px solid #c2c2c2;overflow:hidden"></div>
<div class="a" style="left:5px;top:750px;width:1577px;height:29px;overflow:hidden"><span class="t" style="left:5px;top:-6.100px;font-family:'Liberation Mono',monospace;font-weight:bold;font-size:9.7px;letter-spacing:0.685px;color:#111;line-height:12px">1249: using guessed type __int64 __fastcall print_logo(_QWORD, _QWORD, _QWORD);</span><span class="t" style="left:5px;top:6.400px;font-family:'Liberation Mono',monospace;font-weight:bold;font-size:9.7px;letter-spacing:0.685px;color:#111;line-height:12px">12CC: using guessed type __int64 __fastcall show_volume(_QWORD);</span><span class="t" style="left:5px;top:18px;font-family:'Liberation Mono',monospace;font-weight:bold;font-size:9.7px;letter-spacing:0.685px;color:#111;line-height:12px">13DB: using guessed type __int64 __fastcall print_flag(_QWORD, _QWORD);</span></div>
<div class="a" style="left:1583px;top:750.5px;width:11px;height:28.5px;background:#f1f1f1;border-left:1px solid #c9c9c9"></div>
<svg class="a" style="left:1585.500px;top:754px" width="7" height="5" viewBox="0 0 7 5"><path d="M0.300 4.400 L3.500 0.600 L6.700 4.400Z" fill="#3c3c3c"/></svg>
<div class="a" style="left:1583px;top:761.5px;width:11px;height:1px;background:#c9c9c9;"></div>
<div class="a" style="left:1583px;top:767.5px;width:11px;height:1px;background:#c9c9c9;"></div>
<svg class="a" style="left:1585.500px;top:770.500px" width="7" height="5" viewBox="0 0 7 5"><path d="M0.300 0.600 L3.500 4.400 L6.700 0.600Z" fill="#3c3c3c"/></svg>
<div class="a" style="left:5.3px;top:781px;width:58.7px;height:21.2px;background:linear-gradient(#f8f8f8,#ececec);border:1px solid #c0c0c0;border-radius:3px"></div>
<span class="t" style="left:5.500px;top:783.500px;width:58.500px;text-align:center;font-size:12.500px">IDC</span>
<div class="a" style="left:68px;top:782.5px;width:1526.5px;height:17.5px;background:#fff;border:1px solid #bdbdbd;border-radius:2px"></div>
<span class="t" style="left:6px;top:805.6px;font-family:'Liberation Mono',monospace;font-size:11.2px;letter-spacing:0.78px;color:#4c4c4c">AU:</span>
<span class="t" style="left:44px;top:805.6px;font-family:'Liberation Mono',monospace;font-size:11.2px;letter-spacing:0.78px;color:#4c4c4c">idle</span>
<span class="t" style="left:93px;top:805.6px;font-family:'Liberation Mono',monospace;font-size:11.2px;letter-spacing:0.78px;color:#4c4c4c">Down</span>
<span class="t" style="left:156.5px;top:805.6px;font-family:'Liberation Mono',monospace;font-size:11.2px;letter-spacing:0.78px;color:#4c4c4c">Disk: 486GB</span>
<div class="a" style="left:0px;top:54px;width:4px;height:772px;background:#1f212c;"></div>
<div class="a" style="left:1596px;top:54px;width:4px;height:772px;background:#1f212c;"></div>
<div class="a" style="left:0px;top:822px;width:1600px;height:4px;background:#1f212c;"></div>
</body></html>
